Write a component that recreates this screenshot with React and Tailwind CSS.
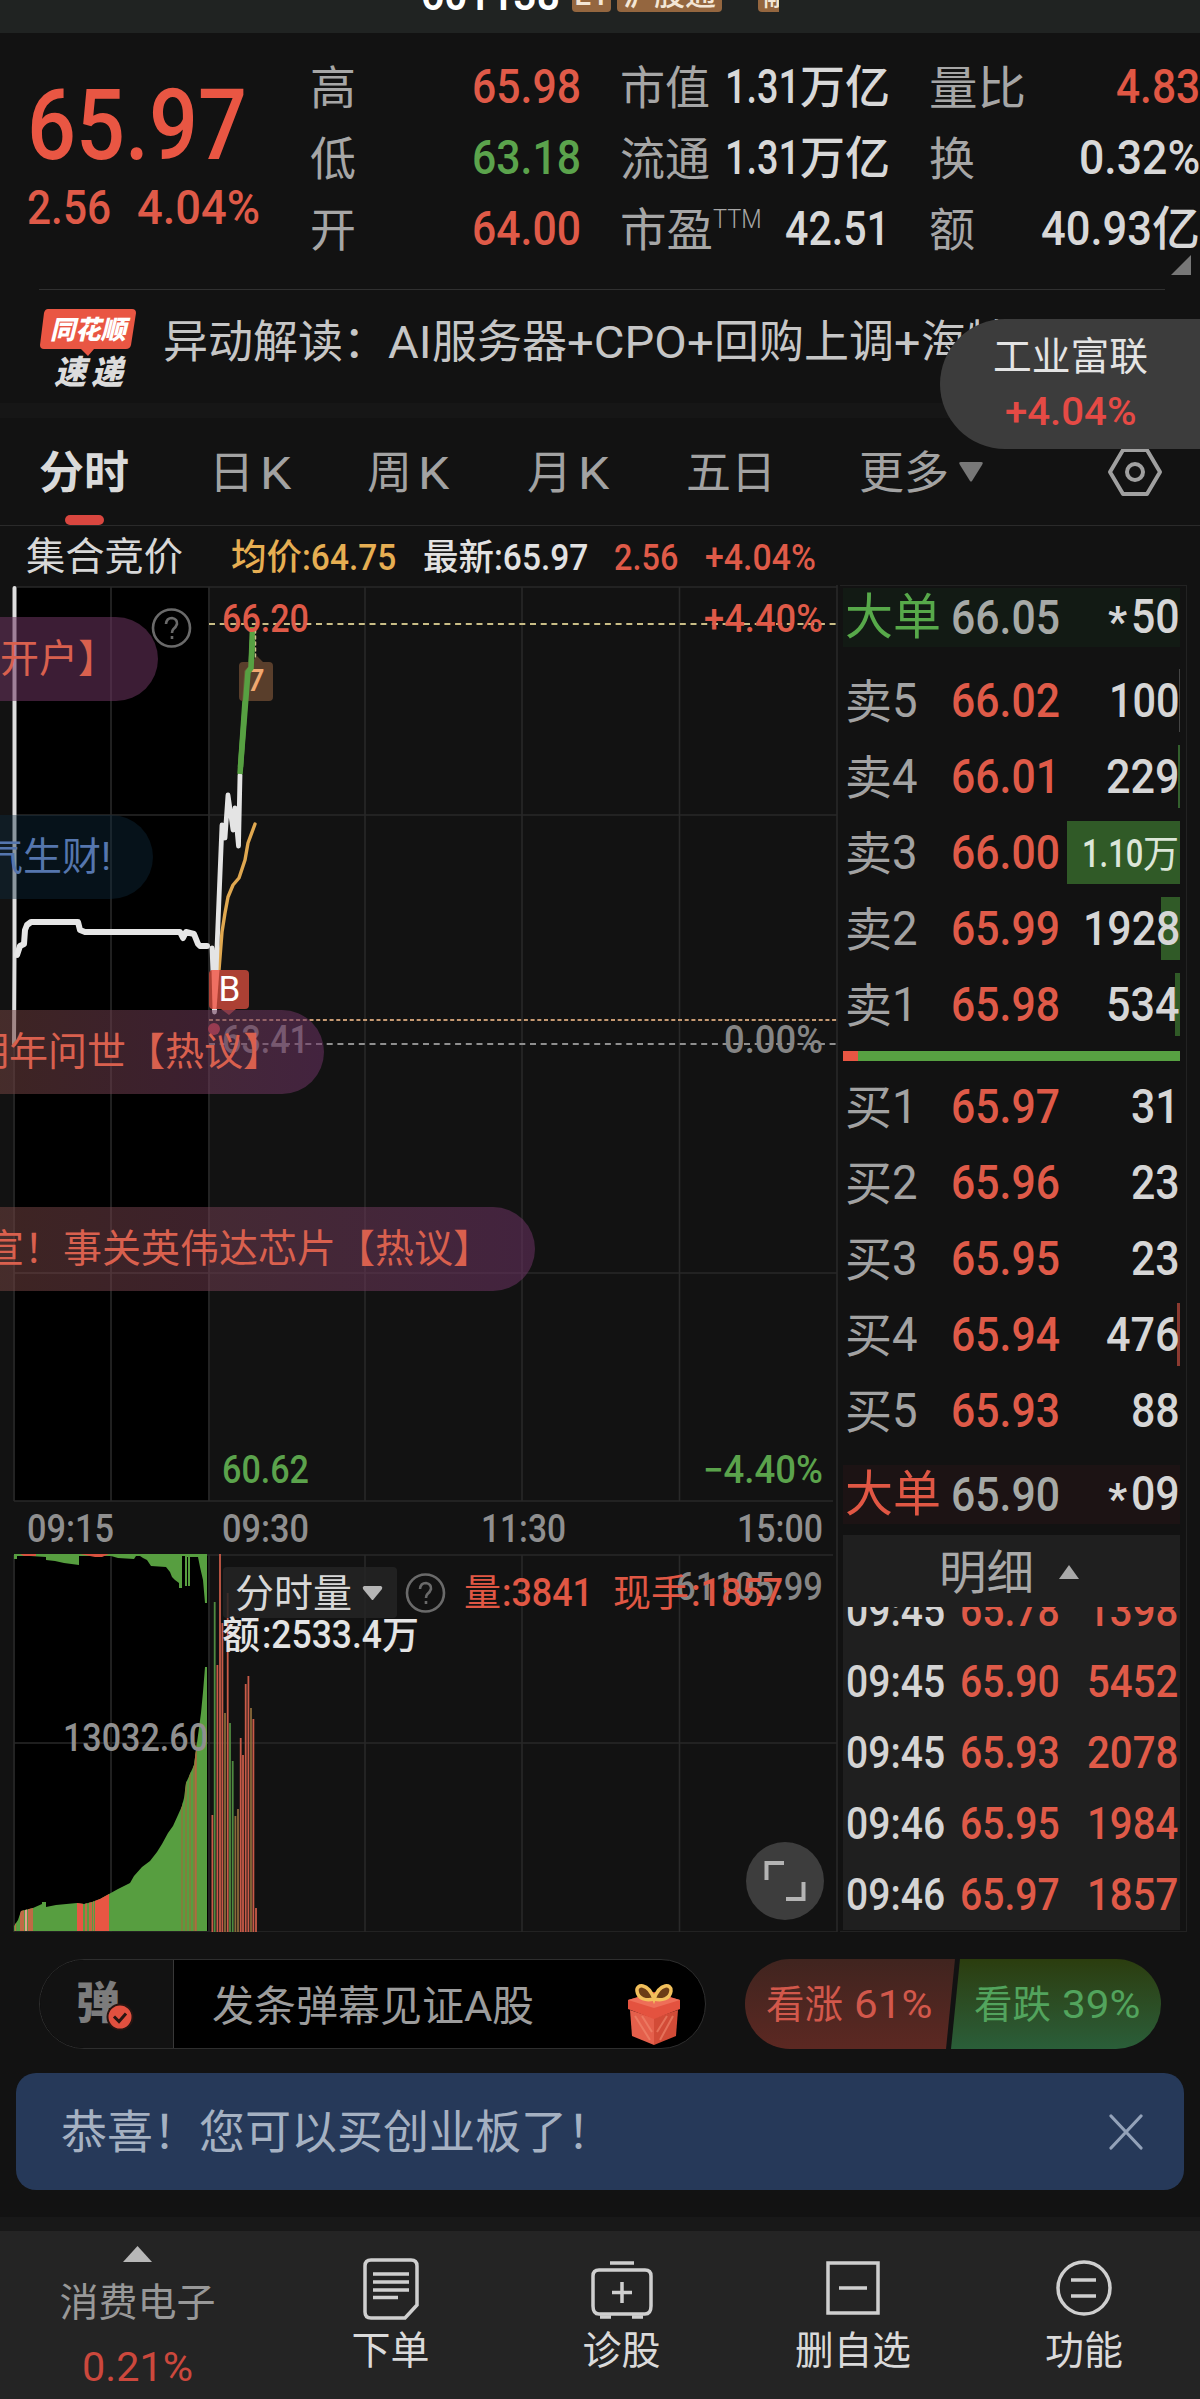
import { useLayoutEffect, useRef, useState } from "react";

/* Scales its text horizontally so that it takes exactly `w` pixels. */
function Fit({ w, className = "", children }) {
  const ref = useRef(null);
  const [scale, setScale] = useState(1);
  useLayoutEffect(() => {
    const natural = ref.current.offsetWidth;
    if (natural) setScale(w / natural);
  }, [w, children]);
  return (
    <span className={"inline-block shrink-0 whitespace-nowrap leading-none " + className} style={{ width: w }}>
      <span ref={ref} className="inline-block origin-left whitespace-nowrap" style={{ transform: `scaleX(${scale})` }}>
        {children}
      </span>
    </span>
  );
}

function TopBar() {
  return (
    <header className="flex h-[33px] items-start overflow-hidden bg-[#202322] pl-[421px]">
      <Fit w={139} className="-mt-[27px] text-[44px] font-semibold text-white">601138</Fit>
      <div className="-mt-[24px] ml-[12px] flex gap-[6px] text-[31px] font-medium leading-none text-[#f3e6d6]">
        <span className="flex h-[36px] w-[39px] items-center justify-center rounded-[4px] bg-[#94663f]">L1</span>
        <span className="flex h-[36px] w-[105px] items-center justify-center rounded-[4px] bg-[#94663f]">沪股通</span>
        <span className="ml-[30px] flex h-[36px] w-[21px] items-center overflow-hidden rounded-bl-[4px] bg-[#94663f] pl-[5px]">融</span>
      </div>
    </header>
  );
}

function Stat({ label, children }) {
  return (
    <div className="flex h-[71px] items-center justify-between leading-none">
      <span className="-ml-[2px] pt-[2px] text-[46px] text-[#a6a6a6]">{label}</span>
      <span className="flex items-center text-[49px] font-medium text-[#d8d8d8]">{children}</span>
    </div>
  );
}

function Quote() {
  return (
    <section className="relative flex h-[257px]">
      <div className="w-[312px] pl-[27px] pt-[44px] leading-none text-[#e95643]">
        <Fit w={220} className="block text-[98px] font-medium">65.97</Fit>
        <div className="mt-[8px] flex gap-[26px] text-[49px] font-medium text-[#df5a48]">
          <Fit w={84}>2.56</Fit>
          <Fit w={123}>4.04%</Fit>
        </div>
      </div>
      <div className="flex w-[888px] gap-[41px] pt-[18px]">
        <div className="w-[269px]">
          <Stat label="高"><Fit w={109} className="text-[#df5a48]">65.98</Fit></Stat>
          <Stat label="低"><Fit w={109} className="text-[#5ba34c]">63.18</Fit></Stat>
          <Stat label="开"><Fit w={109} className="text-[#df5a48]">64.00</Fit></Stat>
        </div>
        <div className="w-[268px]">
          <Stat label={<Fit w={90}>市值</Fit>}><Fit w={75}>1.31</Fit><Fit w={90} className="text-[46px]">万亿</Fit></Stat>
          <Stat label={<Fit w={90}>流通</Fit>}><Fit w={75}>1.31</Fit><Fit w={90} className="text-[46px]">万亿</Fit></Stat>
          <Stat label={<span className="flex"><Fit w={93}>市盈</Fit><Fit w={49} className="text-[25px] font-light">TTM</Fit></span>}>
            <Fit w={105}>42.51</Fit>
          </Stat>
        </div>
        <div className="w-[269px]">
          <Stat label={<Fit w={97}>量比</Fit>}><Fit w={84} className="text-[#e05744]">4.83</Fit></Stat>
          <Stat label="换"><Fit w={121}>0.32%</Fit></Stat>
          <Stat label="额"><Fit w={111}>40.93</Fit><Fit w={48} className="text-[47px]">亿</Fit></Stat>
        </div>
      </div>
      <svg className="absolute right-[9px] top-[222px] h-[20px] w-[20px]" viewBox="0 0 20 20"><path d="M20 0V20H0Z" fill="#777" /></svg>
      <div className="absolute bottom-0 left-[39px] h-px w-[1126px] bg-[#303030]" />
    </section>
  );
}

function News() {
  return (
    <section className="relative h-[113px]">
      <div className="flex h-full items-start pl-[39px]">
        <div className="relative mt-[19px] h-[80px] w-[98px]">
          <svg className="absolute inset-0 h-full w-full" viewBox="0 0 98 80">
            <path d="M9 0H93Q97 0 97 4L92 36Q91 40 87 40H55L49 47L42 40H5Q1 40 1 36L5 4Q6 0 9 0Z" fill="#e95643" />
          </svg>
          <div className="relative flex flex-col items-center font-black italic leading-none">
            <span className="mt-[8px] text-[26px] text-white"><Fit w={76}>同花顺</Fit></span>
            <span className="mt-[13px] flex gap-[5px] text-[33px] text-[#dcdcdc]"><Fit w={32}>速</Fit><Fit w={32}>递</Fit></span>
          </div>
        </div>
        <div className="mt-[30px] flex pl-[26px] text-[45px] leading-none text-[#c6c6c6]">
          <Fit w={225}>异动解读：</Fit>
          <Fit w={44}>AI</Fit>
          <Fit w={135}>服务器</Fit>
          <Fit w={147}>+CPO+</Fit>
          <Fit w={180}>回购上调</Fit>
          <Fit w={27}>+</Fit>
          <span>海特</span>
        </div>
      </div>
      <div className="absolute left-[940px] top-[29px] z-10 flex h-[130px] w-[260px] flex-col items-center rounded-l-[65px] bg-[#3c3c3c] leading-none">
        <Fit w={155} className="mt-[19px] text-[39px] text-[#e4e4e4]">工业富联</Fit>
        <Fit w={131} className="mt-[16px] text-[38px] font-medium text-[#e54a45]">+4.04%</Fit>
      </div>
    </section>
  );
}

function Tabs() {
  return (
    <nav className="relative flex h-[108px] items-center border-b border-[#2a2a2a] pl-[39px] text-[45px] leading-none text-[#a2a2a2]">
      <span className="w-[170px] pt-[4px] font-bold text-[#dadada]">分时</span>
      <span className="flex w-[158px] gap-[6px] pt-[4px]">日<Fit w={31}>K</Fit></span>
      <span className="flex w-[160px] gap-[6px] pt-[4px]">周<Fit w={31}>K</Fit></span>
      <span className="flex w-[159px] gap-[6px] pt-[4px]">月<Fit w={31}>K</Fit></span>
      <span className="w-[173px] pt-[4px]">五日</span>
      <span className="pt-[4px]">更多</span>
      <svg className="ml-[10px] h-[20px] w-[24px]" viewBox="0 0 24 20"><path d="M2 0H22Q25 0 23 3L13 19Q12 20 11 19L1 3Q-1 0 2 0Z" fill="#777" /></svg>
      <svg className="ml-[124px] h-[52px] w-[56px]" viewBox="0 0 56 52" fill="none" stroke="#a0a0a0" strokeWidth="4" strokeLinejoin="round">
        <path d="M16 4H40L53 26L40 48H16L3 26Z" />
        <circle cx="28" cy="26" r="8" />
      </svg>
      <span className="absolute bottom-0 left-[65px] h-[10px] w-[39px] rounded-full bg-[#d9463f]" />
    </nav>
  );
}

function InfoRow() {
  return (
    <div className="flex h-[61px] items-center pl-[26px] pt-[2px] text-[36px] font-medium leading-none text-[#e2e2e2]">
      <Fit w={157} className="mr-[48px] text-[39px] font-normal text-[#d8d8d8]">集合竞价</Fit>
      <span className="flex w-[192px] text-[#e6ae52]"><Fit w={71}>均价</Fit><Fit w={94}>:64.75</Fit></span>
      <span className="flex w-[191px]"><Fit w={71}>最新</Fit><Fit w={94}>:65.97</Fit></span>
      <span className="flex gap-[27px] text-[#df5a48]"><Fit w={64}>2.56</Fit><Fit w={111}>+4.04%</Fit></span>
    </div>
  );
}

const volumeBars = [
  [212.4, 1815, "r"], [214.7, 1602, "g"], [217.4, 1665, "r"], [220, 1554, "r"], [222.4, 1623, "r"],
  [225, 1713, "o"], [227.7, 1593, "r"], [230, 1723, "g"], [232.7, 1761, "g"], [235.4, 1816, "o"],
  [238, 1809, "o"], [240.7, 1738, "r"], [243, 1755, "r"], [245.7, 1684, "r"], [248.4, 1676, "r"],
  [251, 1708, "o"], [253.4, 1719, "r"], [256, 1908, "r"],
];
const barColor = { r: "#c85a48", g: "#4f8a40", o: "#8a6a3a" };

const auctionArea =
  "M14 1931V1926L18 1920L21 1911L33 1908L42 1904V1902H46V1907L56 1905L77 1903L84 1904L92 1902L100 1899L109 1894L118 1889L130 1883L134 1876L142 1867L150 1861L157 1852L162 1844L168 1833L173 1826L178 1815L182 1806L184 1798L186 1783L190 1774L194 1765L196 1750L199 1728L201 1713L203 1692L205 1667H207V1931Z";

function Label({ x, y, w, fill, children, className = "text-[38px]" }) {
  return (
    <text x={x} y={y} textLength={w} lengthAdjust="spacingAndGlyphs" fill={fill} className={className}>{children}</text>
  );
}

function Help({ cx, cy }) {
  return (
    <g fill="none" stroke="#6a6a6a" strokeWidth="2.600">
      <circle cx={cx} cy={cy} r="18.5" />
      <path d={`M${cx - 5.5} ${cy - 4}Q${cx - 5} ${cy - 10} ${cx + 0.5} ${cy - 10}Q${cx + 6} ${cy - 9} ${cx + 5.5} ${cy - 4}Q${cx + 4.5} ${cy - 1} ${cx + 2} ${cy + 1}Q${cx + 0.5} ${cy + 2.5} ${cx + 0.5} ${cy + 5}M${cx + 0.5} ${cy + 8}V${cy + 11}`} />
    </g>
  );
}

function Chart() {
  return (
    <svg className="block h-[1347px] w-[840px] shrink-0 font-medium" viewBox="0 585 840 1347">
      <defs>
        <clipPath id="auction"><path d={auctionArea} /></clipPath>
      </defs>
      <rect x="15" y="587" width="193" height="914" fill="#000" />
      <rect x="15" y="1555" width="193" height="376" fill="#000" />
      <g stroke="#292929" strokeWidth="1.6" fill="none">
        <path d="M14 587H837M14 815H837M14 1273H837M14 1501H833M14 1555H833M14 1743H837M14 1932H837" />
        <path d="M14 587V1501M111 587V1501M209 587V1501M365 587V1501M522 587V1501M679.500 587V1501" />
        <path d="M14 1555V1932M111 1555V1932M209 1555V1932M365 1555V1932M522 1555V1932M679.500 1555V1932M837 585V1932" />
      </g>

      <path d="M209 624H837" stroke="#c9bd86" strokeWidth="2" strokeDasharray="6 4.700" />
      <path d="M209 1020H837" stroke="#c79a72" strokeWidth="2" strokeDasharray="4 2.700" />
      <path d="M209 1044H837" stroke="#8f8f8f" strokeWidth="2" strokeDasharray="6 4.700" />

      <g fill="none" strokeLinejoin="round" strokeLinecap="round">
        <path d="M14.500 588V955L14 1044" stroke="#dedede" strokeWidth="4" />
        <path d="M17 955L20 946L24 944L25 930L27 925L31 922H78L80 930L85 932H180L183 938L186 932L194 934L198 944L200 946H207" stroke="#e6e6e6" strokeWidth="6" />
        <path d="M217 1000L219 970L222 932L225 913L228 897L233 885L239 878L245 860L248 843L255 824" stroke="#e0a850" strokeWidth="3.400" />
        <path d="M212 948L214.500 1012L217 948L222 825L225 838L228 795L233 830L235 808L238.500 846L240 775" stroke="#e4e4e4" strokeWidth="4.800" />
        <path d="M240 774L247 672L251 668L252.500 627" stroke="#57a142" strokeWidth="5.500" strokeLinecap="butt" />
        <path d="M255.500 630V657" stroke="#cbbf8a" strokeWidth="1.500" strokeDasharray="3 3" />
      </g>

      <path d="M243 662H252L257 656L263 662H269Q273 662 273 666V697Q273 701 269 701H243Q239 701 239 697V666Q239 662 243 662Z" fill="#6b4a32" fillOpacity=".8" />
      <text x="247" y="691" fill="#f0a870" className="text-[31px]">7</text>
      <path d="M240.500 767L248 672L251 668L252.500 640" stroke="#57a142" strokeWidth="5.500" fill="none" />

      <path d="M213 970H245Q249 970 249 974V1005Q249 1009 245 1009H236L229 1015L221 1009H213Q209 1009 209 1005V974Q209 970 213 970Z" fill="#ac4034" />
      <path d="M211.500 970H219.500L216.500 1009H212.500Z" fill="#ef6f62" />
      <text x="218.500" y="1001" fill="#fff" className="text-[35px] font-normal">B</text>
      <circle cx="214" cy="1029" r="6" fill="#cc4048" />

      <Label x="222" y="632" w="87" fill="#df5a48">66.20</Label>
      <Label x="704" y="632" w="119" fill="#df5a48">+4.40%</Label>
      <Label x="222" y="1053" w="87" fill="#858585">63.41</Label>
      <Label x="724" y="1053" w="99" fill="#858585">0.00%</Label>
      <Label x="222" y="1483" w="87" fill="#5ba34c">60.62</Label>
      <Label x="703" y="1483" w="120" fill="#5ba34c">−4.40%</Label>
      <Label x="27" y="1542" w="87" fill="#8f8f8f">09:15</Label>
      <Label x="222" y="1542" w="87" fill="#8f8f8f">09:30</Label>
      <Label x="481" y="1542" w="85" fill="#8f8f8f">11:30</Label>
      <Label x="737" y="1542" w="86" fill="#8f8f8f">15:00</Label>
      <Help cx={171.5} cy={628} />

      <path d={auctionArea} fill="#579e40" />
      <g clipPath="url(#auction)">
        <path d="M15 1900H16V1932H15ZM20 1890H24V1932H20ZM28 1890H33V1932H28Z" fill="#c06a45" />
        <path d="M25 1890H27V1932H25Z" fill="#e5a08e" />
        <path d="M77 1890H83V1932H77ZM95 1880H109V1932H95Z" fill="#e95643" />
        <path d="M85 1890H87V1932H85ZM89 1890H92V1932H89ZM93 1890H94V1932H93Z" fill="#c06a45" />
        <path d="M181 1760H183V1932H181ZM185 1760H187V1932H185ZM189 1740H191V1932H189ZM193 1720H197V1932H193Z" fill="#80803c" />
        <path d="M195 1720H196.500V1932H195Z" fill="#b06a40" />
      </g>
      <path d="M14 1554H207V1603H205L203 1580L200 1567L198 1557H190V1586H188V1557H187V1586H185V1556H182V1588H179V1583L175 1580L172 1577L170 1572L166 1567L151 1566L147 1560L143 1558L140 1556H136L134 1559L118 1558L111 1556H79V1565L64 1563L55 1561L46 1560V1557L30 1556H17V1559H14Z" fill="#579e40" />
      <path d="M20 1554H36V1556H24ZM80 1554H109L102 1557H95Z" fill="#d9523f" />

      {volumeBars.map(([x, top, kind]) => (
        <rect key={x} x={x - 0.9} y={top} width="1.8" height={1932 - top} fill={barColor[kind]} />
      ))}

      <rect x="223" y="1567" width="174" height="51" rx="4" fill="#242425" fillOpacity=".85" />
      <Label x="235" y="1607" w="117" fill="#d8d8d8" className="text-[39px] font-normal">分时量</Label>
      <path d="M364 1586H381Q383 1587 382 1589L373 1600H372L363 1589Q362 1587 364 1586Z" fill="#b5b5b5" />
      <Help cx={425.5} cy={1593} />
      <Label x="676" y="1600" w="147" fill="#858585">61105.99</Label>
      <Label x="464" y="1606" w="37" fill="#e05744" className="text-[37px] font-normal">量</Label>
      <Label x="502" y="1606" w="91" fill="#e05744">:3841</Label>
      <Label x="613" y="1606" w="76" fill="#e05744" className="text-[38px] font-normal">现手</Label>
      <Label x="691" y="1606" w="92" fill="#e05744">:1857</Label>
      <Label x="222" y="1648" w="38" fill="#e4e4e4">额</Label>
      <Label x="262" y="1648" w="120" fill="#e4e4e4">:2533.4</Label>
      <Label x="382" y="1648" w="37" fill="#e4e4e4">万</Label>
      <Label x="63" y="1751" w="145" fill="#8f8f8f">13032.60</Label>

      <circle cx="785" cy="1881" r="39" fill="#3d3d3d" />
      <path d="M766.500 1880V1863H784M786 1899H803.500V1882" fill="none" stroke="#b4b4b4" strokeWidth="4" />
    </svg>
  );
}

function Danmaku({ className, children }) {
  return (
    <div className={"absolute left-0 flex h-[84px] items-center justify-end overflow-hidden whitespace-nowrap rounded-r-full pt-[1px] text-[39px] leading-none " + className}>
      {children}
    </div>
  );
}

function BookRow({ label, digit, price, qty, w, bar = "", small }) {
  return (
    <div className="relative flex h-[76px] items-center pl-[2px] pt-[1px] text-[49px] font-medium leading-none text-[#d6d6d6]">
      <div className={"absolute right-0 top-[7px] h-[63px] " + bar} />
      <span className="relative flex w-[106px] font-normal text-[#a2a2a2]"><Fit w={47} className="pt-[2px] text-[47px]">{label}</Fit><Fit w={26}>{digit}</Fit></span>
      <Fit w={109} className="relative text-[#df5a48]">{price}</Fit>
      <span className="relative ml-auto">
        {small ? <span className="flex items-center pr-px pt-[2px] text-[38px] text-[#dce6d8]"><Fit w={61}>1.10</Fit><Fit w={36} className="font-normal">万</Fit></span> : <Fit w={w}>{qty}</Fit>}
      </span>
    </div>
  );
}

function BigOrder({ className, labelClass, price, qty }) {
  return (
    <div className={"flex h-[59px] items-center pl-[2px] text-[49px] font-medium leading-none text-[#d6d6d6] " + className}>
      <Fit w={96} className={"mr-[10px] font-normal " + labelClass}>大单</Fit>
      <Fit w={109} className="text-[#a6a9a6]">{price}</Fit>
      <span className="ml-auto flex"><Fit w={19} className="mr-[4px] pt-[9px] text-[42px] font-bold">*</Fit><Fit w={49}>{qty}</Fit></span>
    </div>
  );
}

const trades = [
  ["09:45", "65.78", "1398"],
  ["09:45", "65.90", "5452"],
  ["09:45", "65.93", "2078"],
  ["09:46", "65.95", "1984"],
  ["09:46", "65.97", "1857"],
];

function OrderBook() {
  return (
    <aside className="flex h-[1347px] w-[347px] flex-col border-r border-t border-b border-[#222] pl-[3px] pr-[6px]">
      <BigOrder className="mt-[2px] bg-[#121a14]" labelClass="text-[#57a94a]" price="66.05" qty="50" />
      <div className="h-[15px] shrink-0" />
      <BookRow label="卖" digit="5" price="66.02" qty="100" w={71} bar="w-px bg-[#444]" />
      <BookRow label="卖" digit="4" price="66.01" qty="229" w={74} bar="w-[2px] bg-[#33602d]" />
      <BookRow label="卖" digit="3" price="66.00" small bar="w-[113px] bg-[#305a27]" />
      <BookRow label="卖" digit="2" price="65.99" qty="1928" w={97} bar="w-[19px] bg-[#305a27]" />
      <BookRow label="卖" digit="1" price="65.98" qty="534" w={74} bar="w-[5px] bg-[#305a27]" />
      <div className="flex h-[26px] shrink-0 items-center pt-[1px]">
        <div className="h-[10px] w-[15px] bg-[#e95643]" />
        <div className="h-[10px] flex-1 bg-[#57a142]" />
      </div>
      <BookRow label="买" digit="1" price="65.97" qty="31" w={49} />
      <BookRow label="买" digit="2" price="65.96" qty="23" w={49} />
      <BookRow label="买" digit="3" price="65.95" qty="23" w={49} />
      <BookRow label="买" digit="4" price="65.94" qty="476" w={74} bar="w-[3px] bg-[#8c3a30]" />
      <BookRow label="买" digit="5" price="65.93" qty="88" w={49} />
      <BigOrder className="mt-[17px] bg-[#1c1314]" labelClass="text-[#e05744]" price="65.90" qty="09" />
      <div className="mt-[11px] flex h-[395px] shrink-0 flex-col bg-[#1f1f1f]">
        <div className="flex h-[72px] shrink-0 items-center pl-[96px] pt-[2px] text-[47px] leading-none text-[#a8a8a8]">
          <Fit w={95}>明细</Fit>
          <svg className="ml-[25px] h-[14px] w-[20px]" viewBox="0 0 20 14"><path d="M10 0L20 14H0Z" fill="#aaa" /></svg>
        </div>
        <div className="h-[323px] overflow-hidden">
          <div className="-mt-[32px] flex flex-col">
            {trades.map(([time, price, volume], i) => (
              <div key={i} className="flex h-[71px] items-center pl-[3px] pr-[2px] text-[45px] font-medium leading-none text-[#df5a48]">
                <Fit w={99} className="mr-[15px] text-[#d4d4d4]">{time}</Fit>
                <Fit w={100}>{price}</Fit>
                <Fit w={91} className="ml-auto">{volume}</Fit>
              </div>
            ))}
          </div>
        </div>
      </div>
    </aside>
  );
}

function Market() {
  return (
    <section className="relative -mt-[2px] flex overflow-hidden">
      <Chart />
      <OrderBook />
      <Danmaku className="top-[32px] w-[158px] bg-[#6d3460]/55 pr-[41px] text-[#d9604e]">开户】</Danmaku>
      <Danmaku className="top-[230px] w-[153px] bg-[#0e2c40]/40 pr-[42px] text-[#5576ae]">气生财<span className="w-[13px] text-center">!</span></Danmaku>
      <Danmaku className="top-[425px] w-[324px] bg-linear-to-r from-[#70423f]/55 to-[#6b3163]/55 pr-[42px] text-[#d9604e]">明年问世【热议】</Danmaku>
      <Danmaku className="top-[622px] w-[535px] bg-linear-to-r from-[#70423f]/55 to-[#6b3163]/55 pr-[43px] text-[#d9604e]">宣！事关英伟达芯片【热议】</Danmaku>
    </section>
  );
}

function Gift() {
  return (
    <svg className="h-[64px] w-[56px]" viewBox="0 0 56 64">
      <path d="M4 28L28 36V63L6 54Z" fill="#e4604c" />
      <path d="M52 28L28 36V63L50 54Z" fill="#d24c38" />
      <path d="M9 34L24 58M16 34L26 50M47 34L34 58M41 34L31 50" stroke="#f28a70" strokeWidth="2" opacity=".6" />
      <path d="M2 18L28 10L54 18V27L28 37L2 27Z" fill="#e4523f" />
      <path d="M2 18L28 26L54 18L28 11Z" fill="#ee6e58" />
      <path d="M28 17C22 0 10 2 11 9C12 17 20 19 28 17C36 19 44 17 45 9C46 2 34 0 28 17Z" fill="#6b3c16" stroke="#f2c05c" strokeWidth="3.500" />
    </svg>
  );
}

function Interaction() {
  return (
    <section className="mt-[27px] flex h-[90px] pl-[39px] leading-none">
      <div className="flex h-[90px] w-[667px] items-center overflow-hidden rounded-full border border-[#2e2e2e] bg-black">
        <div className="flex h-full w-[134px] items-center border-r border-[#383838] bg-[#121212] pl-[36px]">
          <span className="relative text-[44px] font-black text-[#7c7c7c]">
            弹
            <svg className="absolute -right-[14px] -bottom-[5px] h-[28px] w-[28px]" viewBox="0 0 28 28">
              <circle cx="14" cy="14" r="12.500" fill="#e3503f" stroke="#2a1512" strokeWidth="2" />
              <path d="M8 13.500L13 18.500L20 10.500" fill="none" stroke="#2a1512" strokeWidth="3" />
            </svg>
          </span>
        </div>
        <span className="flex pl-[38px] pt-[6px] text-[42px] text-[#9c9c9c]"><Fit w={252}>发条弹幕见证</Fit><Fit w={28}>A</Fit>股</span>
        <div className="ml-auto mr-[23px] mt-[20px]"><Gift /></div>
      </div>
      <div className="relative ml-[39px] flex h-[90px] w-[416px] overflow-hidden rounded-full">
        <div className="absolute inset-0 bg-linear-to-b from-[#40241f] to-[#5c2822] [clip-path:polygon(0_0,210px_0,201px_100%,0_100%)]" />
        <div className="absolute inset-0 bg-linear-to-b from-[#2b3d0e] to-[#2a5e39] [clip-path:polygon(215px_0,100%_0,100%_100%,206px_100%)]" />
        <span className="relative flex w-[208px] items-center gap-[11px] pl-[21px] pt-[2px] text-[39px] text-[#d2584b]"><Fit w={77}>看涨</Fit><Fit w={78}>61%</Fit></span>
        <span className="relative flex items-center gap-[11px] pl-[21px] pt-[2px] text-[39px] text-[#52a45d]"><Fit w={77}>看跌</Fit><Fit w={78}>39%</Fit></span>
      </div>
    </section>
  );
}

function Banner() {
  return (
    <section className="mx-[16px] mt-[24px] flex h-[117px] items-center justify-between rounded-[20px] bg-[#263959] pl-[45px] pr-[40px]">
      <Fit w={552} className="pt-px text-[46px] text-[#a5b1c2]">恭喜！您可以买创业板了！</Fit>
      <svg className="h-[36px] w-[36px]" viewBox="0 0 36 36" stroke="#93a2b9" strokeWidth="3.200" strokeLinecap="round"><path d="M3 2L33 34M33 2L3 34" /></svg>
    </section>
  );
}

function NavItem({ label, w, width, children }) {
  return (
    <div className={"flex flex-col items-center pt-[23px] leading-none " + width}>
      <svg className="h-[68px] w-[68px]" viewBox="0 0 68 68" fill="none" stroke="#cfcfcf" strokeWidth="3.500">{children}</svg>
      <Fit w={w} className="mt-[10px] text-[39px] text-[#dadada]">{label}</Fit>
    </div>
  );
}

function BottomNav() {
  return (
    <nav className="mt-[27px] border-t-[14px] border-[#181818]">
      <div className="flex h-[168px] bg-[#242424]">
        <div className="flex w-[275px] flex-col items-center pt-[15px] leading-none">
          <svg className="h-[16px] w-[29px]" viewBox="0 0 29 16"><path d="M14.500 0L29 16H0Z" fill="#b8b8b8" /></svg>
          <Fit w={156} className="mt-[22px] text-[39px] text-[#989898]">消费电子</Fit>
          <Fit w={111} className="mt-[24px] text-[41px] text-[#cc483d]">0.21%</Fit>
        </div>
        <NavItem label="下单" w={78} width="w-[231px]">
          <path d="M14 6H54Q60 6 60 12V51L48 64H14Q8 64 8 58V12Q8 6 14 6Z" />
          <path d="M16 20H52M16 28H52M16 36H52M16 43.500H41" />
        </NavItem>
        <NavItem label="诊股" w={78} width="w-[231px]">
          <path d="M22 9H46M11 16H57Q63 16 63 22V52Q63 60 57 60H11Q5 60 5 52V22Q5 16 11 16ZM34 28V49M24 38.500H44" />
          <path d="M12 63H23M44 63H55" />
        </NavItem>
        <NavItem label="删自选" w={116} width="w-[231px]">
          <path d="M9 9H59V59H9ZM20 34H48" />
        </NavItem>
        <NavItem label="功能" w={78} width="w-[232px]">
          <circle cx="34" cy="34" r="26" />
          <path d="M21 26H46M21 42H46" />
        </NavItem>
      </div>
    </nav>
  );
}

export default function App() {
  return (
    <main className="h-[2399px] w-[1200px] overflow-hidden bg-[#121212] font-['Roboto','Noto_Sans_CJK_SC',sans-serif]">
      <TopBar />
      <Quote />
      <News />
      <div className="h-[15px] bg-[#161616]" />
      <Tabs />
      <InfoRow />
      <Market />
      <Interaction />
      <Banner />
      <BottomNav />
    </main>
  );
}
